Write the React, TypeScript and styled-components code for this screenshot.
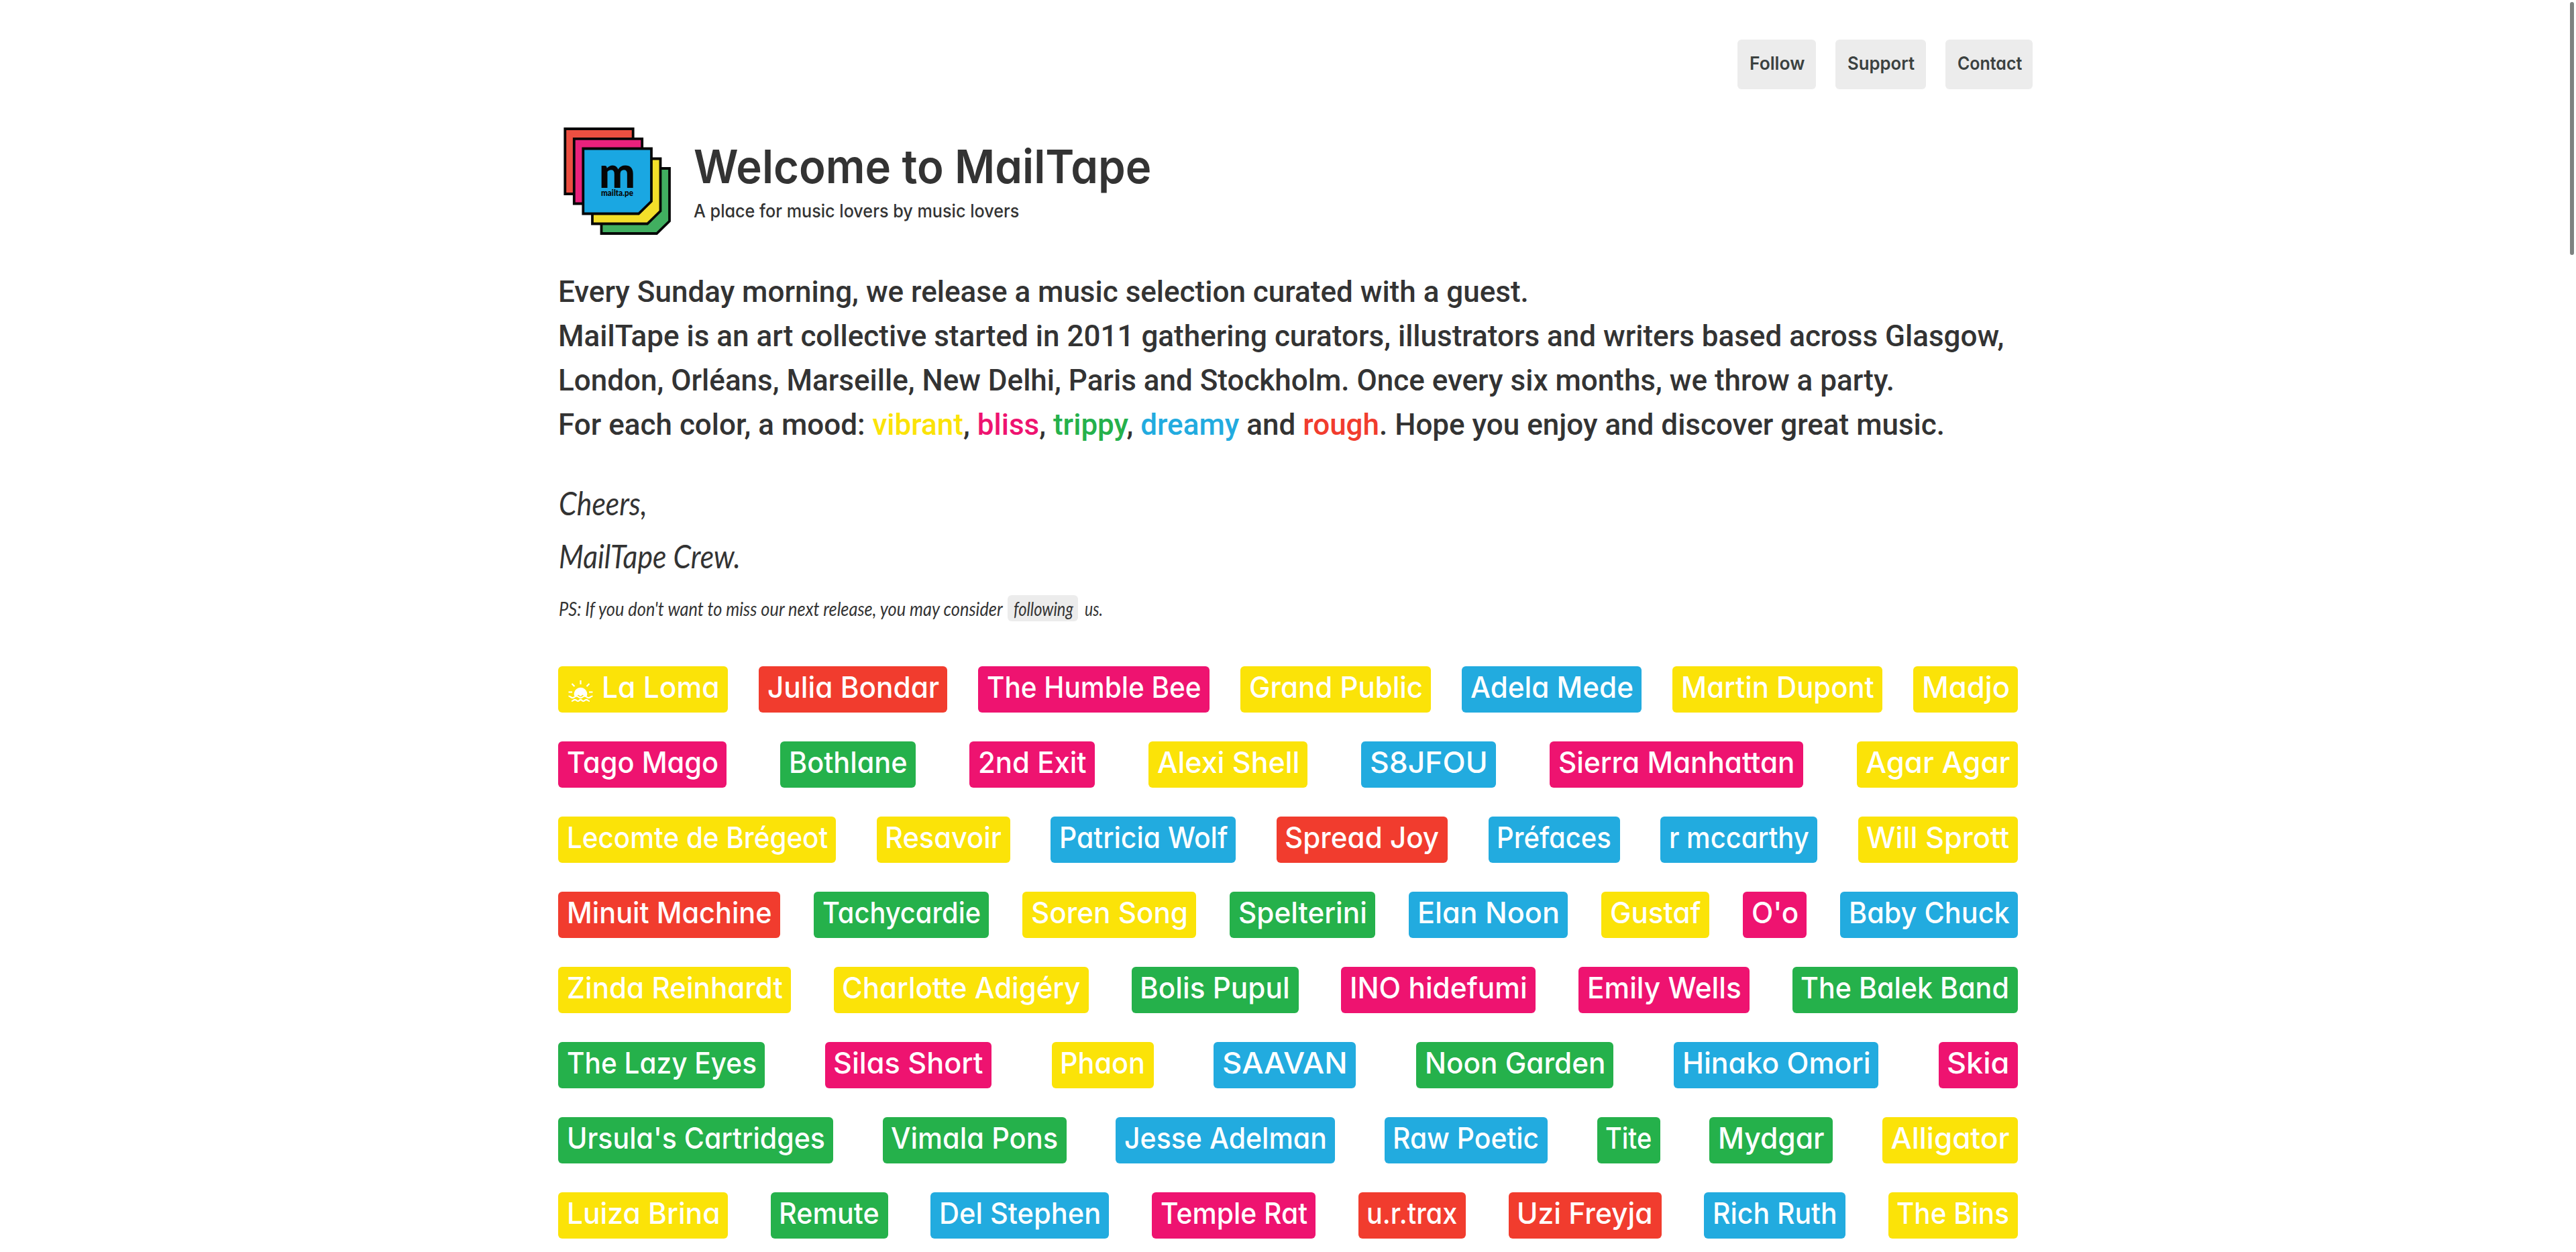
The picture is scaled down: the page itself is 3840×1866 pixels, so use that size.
import React, { useLayoutEffect, useRef, useState } from 'react';
import styled, { createGlobalStyle } from 'styled-components';

const palette = {
  vibrant: '#fbe308',
  bliss: '#ee1370',
  trippy: '#25b14b',
  dreamy: '#22abdf',
  rough: '#f13c2e',
};
type Mood = keyof typeof palette;

const display = `Inter, 'Open Sans', sans-serif`;
const hand = `Lato, sans-serif`;

const GlobalStyle = createGlobalStyle`
  html, body { margin: 0; background: #fff; overflow: hidden; }
  * { box-sizing: border-box; }
  body { color: #333; font-family: ${display}; }
`;

/* Text set to an exact measure: the run is condensed or widened to fill it. */
const Measure = styled.span<{ $width: number }>`
  display: inline-block;
  width: ${p => p.$width}px;
  white-space: nowrap;
`;
const Run = styled.span`
  display: inline-block;
  transform-origin: 0 50%;
`;
function Fit({ width, children }: { width: number; children: React.ReactNode }) {
  const ref = useRef<HTMLSpanElement>(null);
  const [scale, setScale] = useState(1);
  useLayoutEffect(() => {
    if (ref.current) setScale(width / ref.current.offsetWidth);
  }, [width]);
  return (
    <Measure $width={width}>
      <Run ref={ref} style={{ transform: `scaleX(${scale})` }}>{children}</Run>
    </Measure>
  );
}

const Page = styled.main`
  width: 2198px;
  height: 1866px;
  margin-left: 832px;
  padding-top: 59px;
  overflow: hidden;
`;
const Nav = styled.nav`
  display: flex;
  justify-content: flex-end;
  gap: 29px;
`;
const NavButton = styled.a<{ $width: number }>`
  width: ${p => p.$width}px;
  height: 74px;
  padding: 0 0 3px 18px;
  border-radius: 6px;
  background: #ececec;
  color: #3b4140;
  font: 600 27px/71px ${display};
  font-feature-settings: 'cv11' 1;
`;
const Brand = styled.header`
  display: flex;
  margin-top: 49px;
  height: 180px;
`;
const Titles = styled.div`
  display: flex;
  flex-direction: column;
  gap: 8px;
  padding: 24px 0 0 22px;
`;
const Title = styled.h1`
  margin: 0;
  font: 600 69px/84px ${display};
  font-feature-settings: 'cv11' 1;
`;
const Tagline = styled.p`
  margin: 0;
  font: 500 27px/34px ${display};
  font-feature-settings: 'cv11' 1;
`;
const Intro = styled.p`
  margin: 40px 0 0;
  font: 500 44px/66px Roboto, sans-serif;
  white-space: nowrap;
`;
const MoodWord = styled.span<{ $mood: Mood }>`
  color: ${p => palette[p.$mood]};
`;
const SignOff = styled.div`
  margin-top: 44px;
  padding-left: 1px;
  font: italic 400 49px/79px ${hand};
`;
const Line = styled.div`
  height: 79px;
`;
const Postscript = styled.div`
  display: flex;
  margin-top: 19px;
  padding-left: 1px;
  height: 39px;
  font: italic 400 29px/39px ${hand};
`;
const Chip = styled.a`
  width: 105px;
  height: 39px;
  margin: 0 10px 0 7px;
  padding-left: 9px;
  border-radius: 6px;
  background: #ececec;
`;
const Artists = styled.section`
  display: flex;
  flex-direction: column;
  gap: 43px;
  width: 2176px;
  margin-top: 67px;
`;
const ArtistRow = styled.div`
  display: flex;
  justify-content: space-between;
`;
const Tag = styled.a<{ $mood: Mood; $width: number }>`
  display: flex;
  width: ${p => p.$width}px;
  height: 69px;
  padding-left: 12.5px;
  border-radius: 6px;
  background: ${p => palette[p.$mood]};
  color: #fff;
  font: 500 44px/63px ${display};
  font-feature-settings: 'cv11' 1;
`;
const TagIcon = styled.svg`
  flex: none;
  margin: 20px 13px 0 2px;
`;
const ScrollThumb = styled.div`
  position: fixed;
  top: 3px;
  right: 3px;
  width: 6px;
  height: 377px;
  border-radius: 3px;
  background: #7f8281;
`;

function Sunrise() {
  return (
    <TagIcon width="37" height="34" viewBox="0 0 37 34" fill="none" stroke="#fff" strokeWidth="2.2">
      <path d="M9 24A9.800 9.800 0 1 1 28 24L25 25.500L21.500 22.500L18.500 25L15 22.500L12 25.500Z" fill="#fff" stroke="none" />
      <path d="M18.500 1V7M5.500 6L9.500 10M31.500 6L27.500 10M.5 18.500H6M31 18.500H36.500" />
      <path d="M.5 24.500C4 24.500 3.500 27 6.500 27S9.500 24.500 12.500 24.500S15.500 27 18.500 27S21.500 24.500 24.500 24.500S27.500 27 30.500 27S33 24.500 36.500 24.500" />
      <path d="M5 32C8 32 7.500 29.800 10 29.800S12.500 32 14.500 32S16.500 29.800 18.500 29.800S20.500 32 22.500 32S24.500 29.800 27 29.800S29 32 32 32" />
    </TagIcon>
  );
}

function Logo() {
  return (
    <svg width="180" height="180" viewBox="832 182 180 180">
      <g stroke="#060606" strokeWidth="3.800">
        <path d="M896.500 251H998V329.500L979 348H896.500Z" fill="#41af60" />
        <path d="M883 236.500H984.500V314.500L965 333.500H883Z" fill="#f3df2a" />
        <path d="M842.300 192H943.700V289H842.300Z" fill="#ec4f41" />
        <path d="M855.800 206.800H957.200V303.500H855.800Z" fill="#e9217c" />
        <path d="M869.300 221.500H971V300L952 318.500H869.300Z" fill="#1aa7e2" />
      </g>
      <g fill="#060606" fontFamily="Lato, sans-serif" fontWeight="900">
        <text x="893" y="279.500" fontSize="65" textLength="54" lengthAdjust="spacingAndGlyphs">m</text>
        <text x="896" y="292" fontSize="12.500" textLength="48" lengthAdjust="spacingAndGlyphs">mailta.pe</text>
      </g>
    </svg>
  );
}

type Artist = [name: string, mood: Mood, width: number];
const artists: Artist[][] = [
  [['La Loma', 'vibrant', 253], ['Julia Bondar', 'rough', 281], ['The Humble Bee', 'bliss', 345], ['Grand Public', 'vibrant', 284], ['Adela Mede', 'dreamy', 268], ['Martin Dupont', 'vibrant', 313], ['Madjo', 'vibrant', 156]],
  [['Tago Mago', 'bliss', 251], ['Bothlane', 'trippy', 202], ['2nd Exit', 'bliss', 187], ['Alexi Shell', 'vibrant', 237], ['S8JFOU', 'dreamy', 201], ['Sierra Manhattan', 'bliss', 378], ['Agar Agar', 'vibrant', 240]],
  [['Lecomte de Brégeot', 'vibrant', 414], ['Resavoir', 'vibrant', 199], ['Patricia Wolf', 'dreamy', 276], ['Spread Joy', 'rough', 255], ['Préfaces', 'dreamy', 196], ['r mccarthy', 'dreamy', 234], ['Will Sprott', 'vibrant', 238]],
  [['Minuit Machine', 'rough', 331], ['Tachycardie', 'trippy', 261], ['Soren Song', 'vibrant', 259], ['Spelterini', 'trippy', 217], ['Elan Noon', 'dreamy', 237], ['Gustaf', 'vibrant', 161], ["O'o", 'bliss', 95], ['Baby Chuck', 'dreamy', 265]],
  [['Zinda Reinhardt', 'vibrant', 347], ['Charlotte Adigéry', 'vibrant', 380], ['Bolis Pupul', 'trippy', 249], ['INO hidefumi', 'bliss', 290], ['Emily Wells', 'bliss', 255], ['The Balek Band', 'trippy', 336]],
  [['The Lazy Eyes', 'trippy', 308], ['Silas Short', 'bliss', 248], ['Phaon', 'vibrant', 152], ['SAAVAN', 'dreamy', 212], ['Noon Garden', 'trippy', 294], ['Hinako Omori', 'dreamy', 305], ['Skia', 'bliss', 118]],
  [["Ursula's Cartridges", 'trippy', 410], ['Vimala Pons', 'trippy', 274], ['Jesse Adelman', 'dreamy', 327], ['Raw Poetic', 'dreamy', 243], ['Tite', 'trippy', 94], ['Mydgar', 'trippy', 184], ['Alligator', 'vibrant', 202]],
  [['Luiza Brina', 'vibrant', 253], ['Remute', 'trippy', 175], ['Del Stephen', 'dreamy', 266], ['Temple Rat', 'bliss', 244], ['u.r.trax', 'rough', 160], ['Uzi Freyja', 'rough', 228], ['Rich Ruth', 'dreamy', 211], ['The Bins', 'vibrant', 193]],
];

export default function App() {
  return (
    <>
      <GlobalStyle />
      <Page>
        <Nav>
          <NavButton $width={117}><Fit width={82}>Follow</Fit></NavButton>
          <NavButton $width={135}><Fit width={100}>Support</Fit></NavButton>
          <NavButton $width={130}><Fit width={96}>Contact</Fit></NavButton>
        </Nav>
        <Brand>
          <Logo />
          <Titles>
            <Title><Fit width={682}>Welcome to MailTape</Fit></Title>
            <Tagline><Fit width={485}>A place for music lovers by music lovers</Fit></Tagline>
          </Titles>
        </Brand>
        <Intro>
          Every Sunday morning, we release a music selection curated with a guest.<br />
          MailTape is an art collective started in 2011 gathering curators, illustrators and writers based across Glasgow,<br />
          London, Orléans, Marseille, New Delhi, Paris and Stockholm. Once every six months, we throw a party.<br />
          For each color, a mood: <MoodWord $mood="vibrant">vibrant</MoodWord>, <MoodWord $mood="bliss">bliss</MoodWord>,{' '}
          <MoodWord $mood="trippy">trippy</MoodWord>, <MoodWord $mood="dreamy">dreamy</MoodWord> and{' '}
          <MoodWord $mood="rough">rough</MoodWord>. Hope you enjoy and discover great music.
        </Intro>
        <SignOff>
          <Line><Fit width={132}>Cheers,</Fit></Line>
          <Line><Fit width={271}>MailTape Crew.</Fit></Line>
        </SignOff>
        <Postscript>
          <Fit width={662}>PS: If you don't want to miss our next release, you may consider</Fit>
          <Chip><Fit width={89}>following</Fit></Chip>
          <Fit width={27}>us.</Fit>
        </Postscript>
        <Artists>
          {artists.map((row, r) => (
            <ArtistRow key={r}>
              {row.map(([name, mood, width], i) => {
                const featured = r === 0 && i === 0;
                return (
                  <Tag key={name} $mood={mood} $width={width}>
                    {featured && <Sunrise />}
                    <Fit width={width - (featured ? 77 : 25)}>{name}</Fit>
                  </Tag>
                );
              })}
            </ArtistRow>
          ))}
        </Artists>
      </Page>
      <ScrollThumb />
    </>
  );
}
